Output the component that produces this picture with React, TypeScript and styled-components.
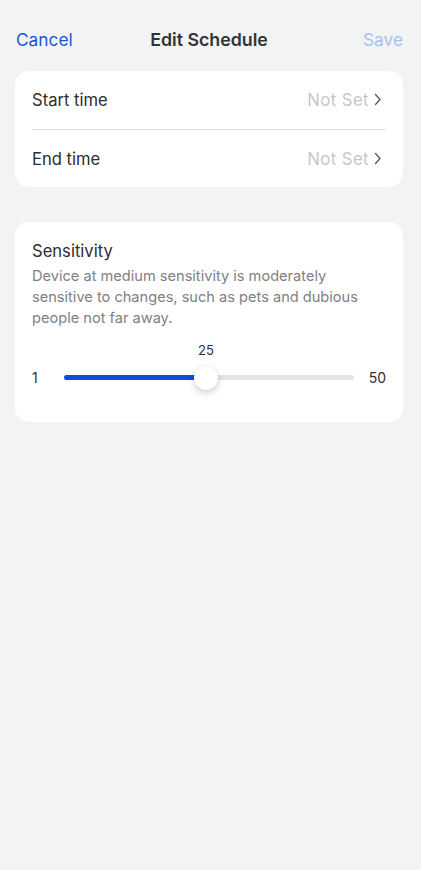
import React from "react";
import styled, { createGlobalStyle } from "styled-components";

const Global = createGlobalStyle`
  html, body { margin: 0; padding: 0; background: #f2f3f5; }
  body { font-family: Inter, "Noto Sans", sans-serif; -webkit-font-smoothing: antialiased; }
`;

const Page = styled.div`
  width: 421px;
  min-height: 870px;
  background: #f2f3f5;
  box-sizing: border-box;
  padding: 0 18px 0 15px;
`;

const Header = styled.div`
  height: 71px;
  display: grid;
  grid-template-columns: 1fr auto 1fr;
  align-items: center;
  padding-top: 7px;
  box-sizing: border-box;
  margin-right: -3px;
`;

const NavButton = styled.span<{ $dim?: boolean }>`
  font-size: 17.3px;
  color: ${(p) => (p.$dim ? "#a8c2f0" : "#1458d6")};
  justify-self: ${(p) => (p.$dim ? "end" : "start")};
  padding-left: ${(p) => (p.$dim ? "0" : "1px")};
  padding-right: ${(p) => (p.$dim ? "3px" : "0")};
`;

const Title = styled.span`
  font-size: 17.8px;
  font-weight: 600;
  color: #333335;
  margin-left: -3px;
`;

const Card = styled.div`
  background: #ffffff;
  border-radius: 14px;
  padding: 0 17px;
`;

const Row = styled.div`
  height: 58px;
  box-sizing: border-box;
  display: flex;
  align-items: center;
  justify-content: space-between;
  padding-bottom: 1px;
  & + & { border-top: 1px solid #e3e3e6; padding-top: 1px; }
`;

const RowLabel = styled.span`
  font-size: 16.6px;
  color: #2e2e30;
`;

const RowValue = styled.span`
  display: flex;
  align-items: center;
  gap: 4px;
  font-size: 16.8px;
  letter-spacing: 0.4px;
  color: #c7c7ca;
  padding-right: 4px;
`;

const SensCard = styled(Card)`
  margin-top: 35px;
  padding: 18px 17px 34px;
`;

const SensTitle = styled.div`
  font-size: 16.6px;
  color: #2e2e30;
  line-height: 22px;
`;

const Desc = styled.div`
  margin-top: 4px;
  font-size: 14.6px;
  line-height: 21px;
  color: #808084;
`;

const SliderArea = styled.div`
  margin-top: 13px;
  display: flex;
  align-items: flex-end;
`;

const EndLabel = styled.span<{ $w: number; $align: string }>`
  width: ${(p) => p.$w}px;
  text-align: ${(p) => p.$align};
  font-size: 14px;
  color: #2e2e30;
  line-height: 20px;
`;

const TrackWrap = styled.div`
  flex: 1;
  display: flex;
  flex-direction: column;
`;

const ValueLabel = styled.div`
  position: relative;
  height: 16px;
  line-height: 16px;
  font-size: 13px;
  color: #2e2e30;
  margin-bottom: 10px;
`;

const ValueText = styled.span`
  position: absolute;
  transform: translateX(-50%);
  top: 0;
`;

const Track = styled.div`
  position: relative;
  height: 5px;
  border-radius: 3px;
  background: #e4e4e6;
  margin: 7px 0 8px;
`;

const Fill = styled.div`
  position: absolute;
  left: 0;
  top: 0;
  bottom: 0;
  border-radius: 3px;
  background: #0a4fd4;
`;

const Thumb = styled.div`
  position: absolute;
  top: 50%;
  width: 24px;
  height: 24px;
  border-radius: 50%;
  background: #fff;
  transform: translate(-50%, -50%);
  box-shadow: 0 3px 7px rgba(0, 0, 0, 0.18), 0 0 1px rgba(0, 0, 0, 0.12);
`;

const Chevron = () => (
  <svg width="9" height="13" viewBox="0 0 9 13" fill="none">
    <path d="M2.5 1.5 L7 6.5 L2.5 11.5" stroke="#555558" strokeWidth="1.3" strokeLinecap="round" strokeLinejoin="round" />
  </svg>
);

export default function App() {
  const min = 1;
  const max = 50;
  const value = 25;
  const pct = ((value - min) / (max - min)) * 100;
  return (
    <Page>
      <Global />
      <Header>
        <NavButton>Cancel</NavButton>
        <Title>Edit Schedule</Title>
        <NavButton $dim>Save</NavButton>
      </Header>
      <Card>
        <Row>
          <RowLabel>Start time</RowLabel>
          <RowValue>
            Not Set <Chevron />
          </RowValue>
        </Row>
        <Row>
          <RowLabel>End time</RowLabel>
          <RowValue>
            Not Set <Chevron />
          </RowValue>
        </Row>
      </Card>
      <SensCard>
        <SensTitle>Sensitivity</SensTitle>
        <Desc>
          Device at medium sensitivity is moderately sensitive to changes, such as pets and dubious people not far away.
        </Desc>
        <SliderArea>
          <EndLabel $w={32} $align="left">1</EndLabel>
          <TrackWrap>
            <ValueLabel>
              <ValueText style={{ left: `${pct}%` }}>{value}</ValueText>
            </ValueLabel>
            <Track>
              <Fill style={{ width: `${pct}%` }} />
              <Thumb style={{ left: `${pct}%` }} />
            </Track>
          </TrackWrap>
          <EndLabel $w={32} $align="right">50</EndLabel>
        </SliderArea>
      </SensCard>
    </Page>
  );
}
